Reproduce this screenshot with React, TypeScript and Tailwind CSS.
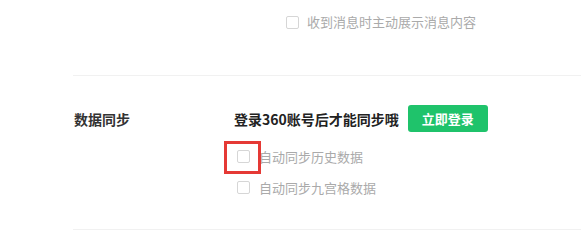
import React from "react";

const font = { fontFamily: '"Microsoft YaHei", "Noto Sans CJK SC", "Noto Sans", sans-serif' };

function Box() {
  return <span className="block w-[13px] h-[13px] shrink-0 rounded-[2px] border border-[#d6d6d6] bg-white" />;
}

export default function App() {
  return (
    <div className="relative w-[581px] h-[247px] bg-white overflow-hidden" style={font}>
      <div className="h-[75px] pl-[286px] pt-[15px]">
        <div className="flex items-center h-[14px]">
          <Box />
          <span className="ml-[8px] text-[13px] leading-[14px] text-[#aaaaaa] whitespace-nowrap">收到消息时主动展示消息内容</span>
        </div>
      </div>
      <div className="ml-[73px] h-px bg-[#f1f1f1]" />
      <div className="flex pl-[74px] pt-[29px]">
        <div className="w-[160px] h-[27px] flex items-center text-[14px] font-bold text-[#333] leading-none">数据同步</div>
        <div className="flex flex-col">
          <div className="flex items-center h-[27px]">
            <span className="text-[14px] font-bold text-[#222] leading-none whitespace-nowrap">登录360账号后才能同步哦</span>
            <button className="ml-[9px] w-[80px] h-[27px] rounded-[3px] bg-[#1fc36b] text-white text-[13px] font-bold leading-none flex items-center justify-center">立即登录</button>
          </div>
          <div className="mt-[9px] flex items-center h-[31px] pl-[3px]">
            <Box />
            <span className="ml-[9px] text-[13px] leading-none text-[#aaaaaa] whitespace-nowrap">自动同步历史数据</span>
          </div>
          <div className="flex items-center h-[31px] pl-[3px]">
            <Box />
            <span className="ml-[9px] text-[13px] leading-none text-[#aaaaaa] whitespace-nowrap">自动同步九宫格数据</span>
          </div>
        </div>
      </div>
      <div className="mt-[26px] ml-[73px] h-px bg-[#f1f1f1]" />
      <div className="absolute left-[224px] top-[141px] w-[37px] h-[33px] border-[3px] border-[#e53935]" />
    </div>
  );
}
